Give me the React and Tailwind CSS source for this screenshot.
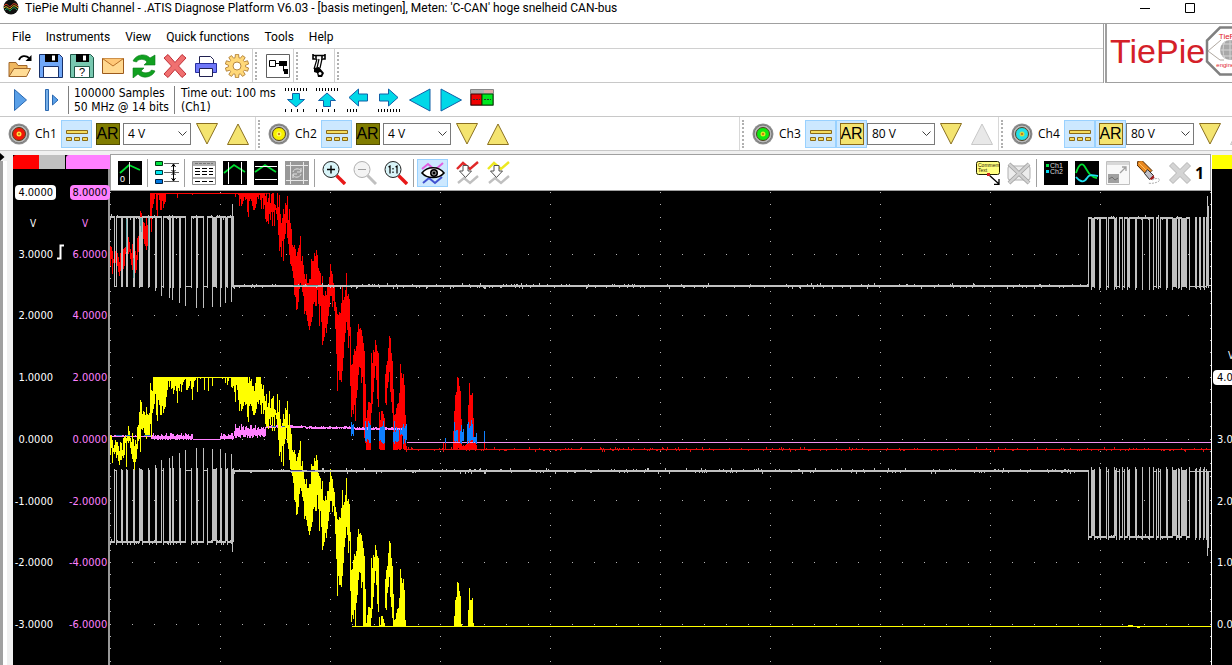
import { useState } from 'react';
import clsx from 'clsx';

// Small seeded generator so the noise on the traces is stable between renders
function createRandom(seed) {
    let s = seed;
    return () => {
        s = (s * 16807) % 2147483647;
        return s / 2147483647;
    };
}

// Signal envelope: [x, top, bottom]
const ENVELOPE = [
    [110, 439, 453], [114, 441, 457], [118, 447, 465], [121, 445, 463], [125, 432, 449], [128, 426, 443], [133, 443, 464],
    [136, 438, 455], [140, 404, 434], [143, 408, 430], [146, 416, 441], [149, 408, 434], [152, 384, 416], [155, 366, 400],
    [161, 360, 414], [165, 360, 408], [168, 350, 386], [177, 350, 394], [184, 350, 386], [190, 350, 388], [192, 350, 398],
    [194, 350, 377], [221, 350, 377], [228, 350, 384], [236, 360, 390], [239, 370, 414], [245, 370, 402], [249, 378, 402],
    [253, 386, 417], [259, 370, 400], [263, 388, 412], [266, 408, 428], [270, 402, 424], [273, 398, 418], [276, 408, 424],
    [281, 420, 458], [286, 410, 436], [290, 432, 470], [293, 448, 486], [296, 458, 520], [300, 452, 488], [305, 482, 515],
    [309, 484, 533], [312, 464, 522], [316, 454, 492], [320, 478, 518], [323, 502, 544], [326, 498, 536], [330, 468, 500],
    [334, 488, 518], [337, 522, 580], [341, 510, 586], [346, 488, 530], [349, 505, 548], [351, 565, 627], [354, 555, 616],
    [359, 526, 575], [362, 540, 590], [364, 560, 640], [366, 620, 660], [370, 600, 660], [371, 575, 626], [375, 542, 578],
    [378, 560, 620], [379, 620, 660], [384, 620, 660], [385, 580, 616], [389, 538, 580], [392, 560, 620], [394, 615, 660],
    [398, 605, 660], [400, 578, 660], [401, 576, 640], [404, 584, 660], [406, 645, 660],
];

const BURSTS = [
    [[453, 640, 660], [455, 600, 660], [457, 578, 660], [460, 600, 660], [462, 650, 660]],
    [[467, 640, 660], [469, 588, 660], [472, 600, 660], [474, 650, 660]],
];

function columns(points, getOffset, min, max, seed) {
    const rand = createRandom(seed);
    let d = '';
    for (let i = 0; i < points.length - 1; i++) {
        const [x0, t0, b0] = points[i];
        const [x1, t1, b1] = points[i + 1];
        for (let x = x0; x < x1; x++) {
            const k = (x - x0) / (x1 - x0);
            const offset = getOffset(x);
            let top = t0 + (t1 - t0) * k + rand() * 12 - 4;
            let bottom = b0 + (b1 - b0) * k - rand() * 12 + 4;
            if (rand() > 0.9) top -= 14;
            if (rand() > 0.88) bottom += 16;
            top = Math.max(min, Math.min(max - 1, Math.round(top + offset)));
            bottom = Math.max(top + 1, Math.min(max, Math.round(bottom + offset)));
            d += `M${x}.5 ${top}V${bottom}`;
        }
    }
    return d;
}

const YELLOW = [ENVELOPE, ...BURSTS].map((points) => columns(points, () => 0, 377, 627, 77)).join('');
const RED = [ENVELOPE, ...BURSTS]
    .map((points) => columns(points, (x) => (x < 150 ? -189 : -205), 193, 450, 77))
    .join('');

function fuzz(ranges, seed) {
    const rand = createRandom(seed);
    let d = '';
    ranges.forEach(([from, to, top, bottom]) => {
        for (let x = from; x < to; x++) {
            const a = Math.round(top + rand() * (bottom - top) * 0.5);
            const b = Math.round(bottom - rand() * (bottom - top) * 0.2);
            d += `M${x}.5 ${a}V${Math.max(a + 1, b)}`;
        }
    });
    return d;
}

const PINK = fuzz([
    [110, 151, 435, 437], [151, 193, 433, 440], [193, 220, 439, 440], [220, 234, 433, 440],
    [234, 266, 424, 438], [266, 306, 425, 428], [306, 355, 426, 429], [355, 406, 427, 430],
], 11);

const BLUE = fuzz([
    [351, 354, 422, 436], [365, 371, 420, 444], [379, 385, 420, 444], [393, 399, 421, 444], [400, 403, 424, 436],
    [403, 407, 421, 444], [454, 458, 420, 444], [460, 464, 424, 444], [467, 473, 420, 444], [473, 477, 430, 444],
    [484, 485, 430, 444], [445, 446, 436, 444],
], 23);

const RED_FEET = fuzz([
    [366, 370, 443, 450], [379, 385, 443, 450], [393, 399, 443, 450], [403, 407, 443, 450], [454, 455, 430, 450],
    [460, 468, 444, 450], [473, 477, 443, 450], [484, 485, 441, 450], [443, 444, 441, 450], [445, 446, 437, 450],
], 31);

function wobble(from, to, y, seed, height = 2) {
    const rand = createRandom(seed);
    let d = '';
    for (let x = from; x < to; x++) {
        const r = rand();
        let up = 0;
        let down = 0;
        if (r > 0.9) up = r > 0.975 ? 2 : 1;
        if (r < 0.1) down = r < 0.02 ? 2 : 1;
        d += `M${x}.5 ${y - up}V${y + height + down}`;
    }
    return d;
}

// Recessive parts of the bus signal: [start, end, overshoot, filled]
const LEFT_PULSES = [
    [114, 116, 1], [121, 122, 1], [126, 127, 1], [133, 134, 1], [139, 142, 2, true], [148, 149, 2], [155, 156, 5],
    [161, 163, 10], [169, 170, 12], [172, 173, 14], [179, 180, 17], [185, 191, 20], [196, 197, 22], [203, 207, 22],
    [212, 216, 21, true], [220, 221, 21], [225, 227, 17, true], [231, 233, 16, true],
];

const RIGHT_PULSES = [
    [1091, 1094, 4, true], [1099, 1100, 4], [1106, 1108, 4], [1114, 1116, 4, true], [1116, 1119, 3], [1122, 1124, 4],
    [1127, 1129, 4, true], [1135, 1136, 4], [1142, 1142, 4], [1149, 1149, 4], [1153, 1156, 4], [1158, 1160, 3],
    [1166, 1167, 4], [1172, 1176, 4, true], [1178, 1179, 3], [1181, 1186, 4, true], [1189, 1195, 4], [1196, 1199, 3],
    [1200, 1203, 4], [1204, 1206, 4],
];

function pulses(list, from, to, dominant, idle) {
    const dir = idle > dominant ? 1 : -1;
    const flat = Math.min(dominant, dominant - dir);
    let lines = '';
    let x = from;
    list.forEach(([a, b, over, filled]) => {
        lines += wobble(x, a + 1, flat, a);
        lines += `M${a}.5 ${dominant}V${idle + over * dir}`;
        lines += `M${a} ${idle}.5H${b + 1}M${b}.5 ${dominant - dir}V${idle + (over > 2 ? 2 : 0) * dir}`;
        if (filled) {
            for (let c = a + 1; c < b; c++) lines += `M${c}.5 ${dominant}V${idle + dir}`;
        }
        x = b;
    });
    return lines + wobble(x, to, flat, x);
}

const GREY = [
    pulses(LEFT_PULSES, 110, 233, 217, 286),
    pulses(LEFT_PULSES, 110, 233, 541, 470),
    pulses(RIGHT_PULSES, 1088, 1207, 218, 286),
    pulses(RIGHT_PULSES, 1088, 1207, 536, 471),
    wobble(234, 1089, 285, 5),
    wobble(234, 1089, 470, 9),
    'M232.5 204V287M232.5 470V552M1088.5 217V287M1088.5 470V538',
    'M1207.5 196V286M1208.5 206V288M1207.5 471V556M1208.5 471V548M1207 285.5H1211M1207 471.5H1211',
].join('');

const RED_IDLE = wobble(406, 1211, 449, 41, 1);

// Graticule: dotted verticals on every division, dotted rows between them
let GRID = '';
for (let col = 0; col <= 10; col++) {
    for (let row = 0; row < 39; row++) GRID += `M${110 + col * 110} ${Math.round(192 + row * 12.33)}.5h1`;
}
for (let row = 1; row < 8; row++) {
    for (let col = 0; col <= 50; col++) GRID += `M${110 + col * 22} ${Math.round(192 + row * 61.65)}.5h1`;
}

function Plot() {
    return (
        <svg
            role="img"
            aria-label="Oscilloscope graph"
            viewBox="110 191 1101 474"
            preserveAspectRatio="none"
            shapeRendering="crispEdges"
            className="block w-full min-h-0 flex-1 bg-black"
            fill="none"
        >
            <path d={GRID} stroke="#b4b4b4" />
            <path d="M190 193.5H270" stroke="#b00000" />
            <path d={RED} stroke="#ff0000" />
            <path d={RED_IDLE} stroke="#e81010" />
            <path d={RED_FEET} stroke="#ff0000" />
            <path d={PINK} stroke="#ff80ff" />
            <path d="M407 442.5H1211" stroke="#f090f0" />
            <path d={BLUE} stroke="#1080ff" />
            <path d="M190 377.5H236M352 626.5H1211M459 625.5h3M1128 625.5h5M1137 627.5h3" stroke="#ffff00" />
            <path d={YELLOW} stroke="#ffff00" />
            <path d={GREY} stroke="#c0c0c0" />
            <path d="M126.5 219V252M133.5 258V278M148.5 218V250M140.5 218V226M141.5 218V232M293 285.5H303M307 285.5H318M347 285.5h3" stroke="#60a8a8" />
            <path d="M116 435.5h6M126 435.5h4M144 435.5h7M272 426.5h4M282 426.5h3" stroke="#1870b0" />
            <path d="M290 470.5h12M307 470.5h8" stroke="#404080" />
        </svg>
    );
}

function Svg({ children, size = 24 }) {
    return (
        <svg width={size} height={size} viewBox="0 0 24 24" fill="none" aria-hidden="true" className="shrink-0">
            {children}
        </svg>
    );
}

function gearPath() {
    let d = '';
    for (let i = 0; i < 10; i++) {
        const a = (i * Math.PI) / 5;
        [[-0.22, 8.5], [-0.14, 11.8], [0.14, 11.8], [0.22, 8.5]].forEach(([da, r]) => {
            const x = 12 + r * Math.sin(a + da);
            const y = 12 - r * Math.cos(a + da);
            d += `${d ? 'L' : 'M'}${x.toFixed(1)} ${y.toFixed(1)}`;
        });
    }
    return `${d}Z`;
}

const GEAR = gearPath();

const icons = {
    open: (
        <Svg>
            <path d="M1 22.500V8.500h7l2 3h9v3" fill="#f0b860" stroke="#a0662a" />
            <path d="M1 22.500l5-8h16.500l-4 8z" fill="#ffdc96" stroke="#a0662a" />
            <path d="M11 6C12.500 1.500 18 1 21 4" stroke="#000" strokeWidth="1.800" />
            <path d="M23.500 1v6h-6z" fill="#000" />
        </Svg>
    ),
    save: (
        <Svg>
            <path d="M.5.500h20l3 3v20H.500z" fill="#70a8f8" stroke="#183068" />
            <path d="M6 0h13v8H6z" fill="#000" />
            <path d="M13 1.500h3v5h-3z" fill="#fff" />
            <path d="M4.500 12.500h15v11h-15z" fill="#fff" stroke="#183068" />
        </Svg>
    ),
    saveAs: (
        <Svg>
            <path d="M.5.500h20l3 3v20H.500z" fill="#78c8b0" stroke="#205848" />
            <path d="M6 0h13v8H6z" fill="#000" />
            <path d="M13 1.500h3v5h-3z" fill="#fff" />
            <path d="M4.500 12.500h15v11h-15z" fill="#fff" stroke="#205848" />
            <text x="12" y="22" fontSize="11" textAnchor="middle" fill="#000" fontFamily="Liberation Sans, sans-serif">?</text>
        </Svg>
    ),
    mail: (
        <Svg>
            <path d="M1.500 4.500h21v15h-21z" fill="#ffd890" stroke="#9c5a1c" />
            <path d="M1.500 4.500L12 12l10.500-7.500" fill="#ffc878" stroke="#b87028" />
        </Svg>
    ),
    refresh: (
        <Svg>
            <path d="M1 7C4 0 14-1 18 4l5-3v10H12l3-3C12 4 6 5 4.500 8z" fill="#10a020" stroke="#087818" strokeWidth=".6" />
            <path d="M23 17c-3 7-13 8-17 3l-5 4V14h11l-3 3c3 3 9 2 10.500-1z" fill="#10a020" stroke="#087818" strokeWidth=".6" />
        </Svg>
    ),
    remove: (
        <Svg>
            <path d="M1 4l4-3.500 7 8 7-8L23 4l-7.500 8 7.500 8-4 3.500-7-8-7 8L1 20l7.500-8z" fill="#f07070" stroke="#c03038" />
        </Svg>
    ),
    print: (
        <Svg>
            <path d="M5.500 2.500h11l3 3v5h-14z" fill="#fff" stroke="#202050" />
            <path d="M1.500 9.500h21v9h-21z" fill="#7078f8" stroke="#2830a0" />
            <path d="M5.500 14.500h13v8h-13z" fill="#fff" stroke="#202050" />
        </Svg>
    ),
    gear: (
        <Svg>
            <path d={GEAR} fill="#ffd878" stroke="#b88840" />
            <circle cx="12" cy="12" r="4" fill="#fff" stroke="#b88840" />
        </Svg>
    ),
    objects: (
        <Svg>
            <path d="M.5.500h23v23H.500z" fill="#fff" stroke="#606060" />
            <path d="M3.500 6.500h6v6h-6z" stroke="#000" />
            <path d="M10 9.500h4M17.500 11v6h1" stroke="#000" />
            <path d="M13 7h8v5h-8zM18 15h4v5h-4z" fill="#000" />
        </Svg>
    ),
    probe: (
        <Svg>
            <path d="M6 1.500h12M6 0v5h2M18 0v5h-2M9 2v4M15 2v4" stroke="#000" strokeWidth="1.600" />
            <path d="M10 5l-3 10M15 5l-2 9M12 5l-2 9" stroke="#000" strokeWidth="1.200" />
            <path d="M7 14l5-1 5 6-2 4h-4l-1-4-3-1z" fill="#000" />
            <circle cx="13" cy="19.500" r="1.500" fill="#fff" />
        </Svg>
    ),
    play: <Svg><path d="M6.500 1.500l12 10.500-12 10.500z" fill="#5aa0e8" stroke="#2a68b0" /></Svg>,
    step: (
        <Svg>
            <path d="M6.500 1.500h3v21h-3z" fill="#78b0e8" stroke="#2a68b0" />
            <path d="M13.500 7l5.500 5-5.500 5z" fill="#5aa0e8" stroke="#2a68b0" />
        </Svg>
    ),
    down: (
        <Svg>
            <path d="M1.500 0v3M4.500 0v3M7.500 0v3M10.500 0v3M13.500 0v3M16.500 0v3M19.500 0v3M22.500 0v3M1.500 21v3M7.500 21v3M13.500 21v3M19.500 21v3" stroke="#000" />
            <path d="M8.500 5.500h7v6h5L12 19l-8.500-7.500h5z" fill="#00d8e8" stroke="#1060a8" />
        </Svg>
    ),
    up: (
        <Svg>
            <path d="M1.500 0v3M4.500 0v3M7.500 0v3M10.500 0v3M13.500 0v3M16.500 0v3M19.500 0v3M22.500 0v3M1.500 21v3M7.500 21v3M13.500 21v3M19.500 21v3" stroke="#000" />
            <path d="M8.500 18.500h7v-6h5L12 5l-8.500 7.500h5z" fill="#00d8e8" stroke="#1060a8" />
        </Svg>
    ),
    left: (
        <Svg>
            <path d="M21.500 6v7h-9v5L3 9.500 12.500 1v5z" fill="#00d8e8" stroke="#1060a8" />
            <path d="M1.500 21v3M4.500 21v3M7.500 21v3M10.500 21v3" stroke="#000" />
        </Svg>
    ),
    right: (
        <Svg>
            <path d="M2.500 6v7h9v5L21 9.500 11.500 1v5z" fill="#00d8e8" stroke="#1060a8" />
            <path d="M1.500 21v3M4.500 21v3M7.500 21v3M10.500 21v3M13.500 21v3M16.500 21v3M19.500 21v3M22.500 21v3" stroke="#000" />
        </Svg>
    ),
    prev: <Svg><path d="M22 1v22L1.500 12z" fill="#00d8e8" stroke="#1060a8" /></Svg>,
    next: <Svg><path d="M2 1v22l20.500-11z" fill="#00d8e8" stroke="#1060a8" /></Svg>,
    panels: (
        <Svg>
            <path d="M.5 1.500h23v16H.500z" fill="#b0b0b0" stroke="#888" />
            <path d="M14 2h9v3h-9z" fill="#e0a8a8" />
            <path d="M1 6h11v11H1z" fill="#f00000" stroke="#400" />
            <path d="M12 6h11v11H12z" fill="#00e820" stroke="#040" />
            <path d="M3 11.500h7M14 11.500h7" stroke="#303030" strokeDasharray="2 1" />
        </Svg>
    ),
    zero: (
        <Svg>
            <path d="M0 0h24v24H0z" fill="#000" />
            <path d="M2 12l9-8 11 5" stroke="#00e030" strokeWidth="1.800" />
            <path d="M11.500 1v22" stroke="#e0e0e0" />
            <text x="2" y="21" fontSize="9" fill="#fff" fontFamily="Liberation Sans, sans-serif">0</text>
        </Svg>
    ),
    channels: (
        <Svg>
            <path d="M9 2.500h15M9 11.500h15M9 20.500h15" stroke="#606060" />
            <path d="M.5.500h7v4h-7z" fill="#00e040" stroke="#003810" />
            <path d="M.5 9.500h7v4h-7z" fill="#00e8f0" stroke="#003838" />
            <path d="M.5 18.500h7v4h-7z" fill="#0078e0" stroke="#002040" />
            <path d="M18.500 3v17M16.500 6l2-3 2 3M16.500 9l2 2 2-2M16.500 14l2-2 2 2M16.500 17l2 3 2-3" stroke="#000" />
        </Svg>
    ),
    table: (
        <Svg>
            <path d="M.5.500h23v23H.500z" fill="#fff" stroke="#909090" />
            <path d="M1 1h22v4H1z" fill="#b0b0b0" />
            <path d="M3 2.500h18" stroke="#777" strokeDasharray="3 1" />
            <path d="M3 7.500h18M3 10.500h18M3 13.500h18M3 20.500h18" stroke="#000" strokeDasharray="5 2" />
            <path d="M1 17h22" stroke="#606060" />
        </Svg>
    ),
    cursorsV: (
        <Svg>
            <path d="M0 0h24v24H0z" fill="#000" />
            <path d="M1 12l10-8 11 7" stroke="#00e030" strokeWidth="1.800" />
            <path d="M5.500 1v22M18.500 1v22" stroke="#fff" />
        </Svg>
    ),
    cursorsH: (
        <Svg>
            <path d="M0 0h24v24H0z" fill="#000" />
            <path d="M1 11l10-7 11 7" stroke="#00e030" strokeWidth="1.800" />
            <path d="M1 5.500h22M1 18.500h22" stroke="#fff" />
        </Svg>
    ),
    cursorsOff: (
        <Svg>
            <path d="M0 0h24v24H0z" fill="#989898" />
            <path d="M5.500 1v22M18.500 1v22M1 4.500h22M1 19.500h22" stroke="#e8e8e8" />
            <path d="M8 11c1-4 7-4 8-1M16 13c-1 4-7 4-8 1M16 7v4h-4M8 17v-4h4" stroke="#e0e0e0" />
        </Svg>
    ),
    zoomIn: (
        <Svg>
            <path d="M14.500 14.500l8.500 8.500" stroke="#e81818" strokeWidth="3.400" />
            <circle cx="9" cy="8.500" r="8" fill="#d8f4f8" stroke="#202020" />
            <path d="M5 8.500h8M9 4.500v8" stroke="#000" strokeWidth="1.400" />
        </Svg>
    ),
    zoomOut: (
        <Svg>
            <path d="M14.500 14.500l8.500 8.500" stroke="#c0c0c0" strokeWidth="3" />
            <circle cx="9" cy="8.500" r="8" fill="#f4f4f4" stroke="#b0b0b0" />
            <path d="M5 8.500h8" stroke="#a0a0a0" />
        </Svg>
    ),
    zoomFit: (
        <Svg>
            <path d="M14.500 14.500l8.500 8.500" stroke="#e81818" strokeWidth="3.400" />
            <circle cx="9" cy="8.500" r="8" fill="#d8f4f8" stroke="#202020" />
            <path d="M4.500 6L6 5v7.500M11.500 6L13 5v7.500M9 7v1.500M9 10.500V12" stroke="#000" strokeWidth="1.200" />
        </Svg>
    ),
    eye: (
        <Svg>
            <path d="M1 8l6-5 7 6 8-7" stroke="#e060e0" strokeWidth="2" />
            <path d="M2 22l6-5 6 5 7-6" stroke="#4050d0" strokeWidth="2" />
            <path d="M1 12c5-7 17-7 22 0-5 6-17 6-22 0z" fill="#fff" stroke="#000" strokeWidth="1.600" />
            <circle cx="13" cy="12" r="4" fill="#000" />
            <circle cx="13" cy="12" r="2" stroke="#aaa" />
        </Svg>
    ),
    toRef: (
        <Svg>
            <path d="M1 8l6-6 7 6 8-7" stroke="#e02828" strokeWidth="2.400" />
            <path d="M2 22l6-5 6 5 8-7" stroke="#c0c0c0" strokeWidth="2.400" />
            <path d="M7 4.500h5V10h3.500l-6 6.500-6-6.500H7z" fill="#fff" stroke="#505050" />
        </Svg>
    ),
    toRefYellow: (
        <Svg>
            <path d="M1 8l6-6 7 6 8-7" stroke="#ece820" strokeWidth="2.400" />
            <path d="M2 22l6-5 6 5 8-7" stroke="#c0c0c0" strokeWidth="2.400" />
            <path d="M7 4.500h5V10h3.500l-6 6.500-6-6.500H7z" fill="#fff" stroke="#505050" />
        </Svg>
    ),
    comment: (
        <Svg>
            <rect x=".5" y=".5" width="23" height="13" rx="2" fill="#ffff80" stroke="#202000" />
            <text x="2" y="6" fontSize="5" fill="#302000" fontFamily="Liberation Sans, sans-serif">Comment</text>
            <text x="2" y="11" fontSize="5" fill="#302000" fontFamily="Liberation Sans, sans-serif">Text</text>
            <path d="M13 14l10 9M23 18v5.500h-5" stroke="#000" strokeWidth="1.300" />
            <path d="M11 12h3v3h-3z" fill="#d02020" />
        </Svg>
    ),
    commentOff: (
        <Svg>
            <rect x="1" y="5" width="22" height="14" rx="2" fill="#ececec" stroke="#b0b0b0" />
            <path d="M2 3l20 19M22 3L2 22" stroke="#a0a0a0" strokeWidth="4" />
            <path d="M2 3l20 19M22 3L2 22" stroke="#d0d0d0" strokeWidth="2.500" />
        </Svg>
    ),
    legend: (
        <Svg>
            <path d="M0 0h24v24H0z" fill="#000" />
            <path d="M2 3h3v3H2z" fill="#00e040" />
            <path d="M2 9h3v3H2z" fill="#00d8f0" />
            <text x="6" y="7" fontSize="7" fill="#d8d8d8" fontFamily="Liberation Sans, sans-serif">Ch1</text>
            <text x="6" y="13" fontSize="7" fill="#d8d8d8" fontFamily="Liberation Sans, sans-serif">Ch2</text>
        </Svg>
    ),
    waves: (
        <Svg>
            <path d="M0 0h24v24H0z" fill="#000" />
            <path d="M1 12C4 3 7 1 10 6s5 10 12 11" stroke="#00e030" strokeWidth="1.800" />
            <path d="M1 16c4 5 8 6 11 1 2-4 6-3 11-2" stroke="#20e0f0" strokeWidth="1.800" />
        </Svg>
    ),
    windowOff: (
        <Svg>
            <path d="M.5.500h23v23H.500z" fill="#f8f8f8" stroke="#c0c0c0" />
            <path d="M1 1h22v3H1z" fill="#d8d8d8" />
            <path d="M2 13h11v9H2z" fill="#a0a0a0" />
            <path d="M3 18l3-2 3 3 3-2" stroke="#707070" />
            <path d="M14 12l6-6M16 6h4v4" stroke="#a0a0a0" strokeWidth="1.300" />
        </Svg>
    ),
    brush: (
        <Svg>
            <path d="M1 0l4-.500 10 10-5 5L0 4z" fill="#e88820" stroke="#502800" />
            <path d="M2 2l9 9" stroke="#ffc060" />
            <path d="M10.500 8.500l6 6-4 4-5-6z" fill="#c0c0c8" stroke="#303030" />
            <path d="M12.500 18l4-4 1 3-3 2z" fill="#a02020" />
            <path d="M15 19c5-3 9-1 7 1s-9 3-11 2" stroke="#b0b0b0" strokeDasharray="2 1" />
        </Svg>
    ),
    clearOff: (
        <Svg>
            <path d="M1.500 5L5 1.500l7 7 7-7L22.500 5l-7 7 7 7-3.500 3.500-7-7-7 7L1.500 19l7-7z" fill="#d4d4d4" stroke="#b4b4b4" />
        </Svg>
    ),
    rangeDown: <Svg><path d="M1.500 1.500h21L12 22z" fill="#f4e470" stroke="#8a7020" /></Svg>,
    rangeUp: <Svg><path d="M1.500 22.500h21L12 2z" fill="#f4e470" stroke="#8a7020" /></Svg>,
    rangeUpOff: <Svg><path d="M1.500 22.500h21L12 2z" fill="#e8e8e8" stroke="#c8c8c8" /></Svg>,
    coupling: (
        <Svg>
            <path d="M1.500 8.500h21v3h-21zM1.500 15.500h5v3h-5zM9.500 15.500h5v3h-5zM17.500 15.500h5v3h-5z" fill="#f4dc60" stroke="#8a6a18" />
        </Svg>
    ),
};

function ToolButton({ icon, label, active, onClick }) {
    return (
        <button
            type="button"
            aria-label={label}
            title={label}
            onClick={onClick}
            className={clsx(
                'flex h-7 w-[31px] shrink-0 items-center justify-center',
                active && 'border border-[#99d1ff] bg-[#cce8ff]'
            )}
        >
            {icons[icon]}
        </button>
    );
}

function Grip() {
    return <span className="ml-[2px] h-7 w-0 shrink-0 border-l-2 border-dotted border-[#b0b0b0]" />;
}

function Separator() {
    return <span className="mr-[3px] ml-[2px] h-7 w-px shrink-0 border-l border-[#a0a0a0]" />;
}

const MENU = ['File', 'Instruments', 'View', 'Quick functions', 'Tools', 'Help'];

const FILE_TOOLS = [
    ['open', 'Open'], ['save', 'Save'], ['saveAs', 'Save as'], ['mail', 'Send mail'],
    ['refresh', 'Refresh'], ['remove', 'Delete'], ['print', 'Print'], ['gear', 'Settings'],
];

const TIME_TOOLS = [
    ['down', 'Fewer samples'], ['up', 'More samples'], ['left', 'Slower'], ['right', 'Faster'],
    ['prev', 'Previous'], ['next', 'Next'], ['panels', 'Instrument panels'],
];

function TitleBar() {
    return (
        <header className="flex h-6 items-start border-b border-[#a0a0a0]">
            <svg width="16" height="16" viewBox="0 0 16 16" className="ml-[3px] shrink-0" aria-hidden="true">
                <circle cx="8" cy="7" r="7.500" fill="#101010" />
                <path d="M1 6c3-5 5 3 7 0s4-3 7 0" stroke="#e04020" fill="none" />
                <path d="M1 8c3-4 5 3 7 0s4-3 7 0" stroke="#e0c020" fill="none" />
                <path d="M2 10c3-4 4 3 6 0s4-3 6 0" stroke="#20b060" fill="none" />
            </svg>
            <h1 className="ml-[6px] font-['Roboto',sans-serif] text-[12px] leading-4 whitespace-nowrap">
                TiePie Multi Channel - .ATIS Diagnose Platform V6.03 - [basis metingen], Meten: 'C-CAN' hoge snelheid CAN-bus
            </h1>
            <div className="-mr-3 ml-auto flex shrink-0">
                <button type="button" aria-label="Minimize" className="flex h-4 w-[45px] items-center justify-center">
                    <svg width="10" height="10" viewBox="0 0 10 10"><path d="M0 5.500h10" stroke="#000" /></svg>
                </button>
                <button type="button" aria-label="Maximize" className="flex h-4 w-[45px] items-center justify-center">
                    <svg width="10" height="10" viewBox="0 0 10 10"><path d="M.5.500h9v9h-9z" stroke="#000" fill="none" /></svg>
                </button>
                <button type="button" aria-label="Close" className="flex h-4 w-8 items-center justify-end">
                    <svg width="10" height="10" viewBox="0 0 10 10"><path d="M0 0l10 10M10 0L0 10" stroke="#000" /></svg>
                </button>
            </div>
        </header>
    );
}

function Logo() {
    return (
        <div className="ml-px flex w-[127px] shrink-0 items-center overflow-hidden border-b border-l-2 border-[#a0a0a0] pb-1 pl-[3px]">
            <span className="font-['Liberation_Sans',sans-serif] text-[34px] leading-[40px] text-[#d42028]">TiePie</span>
            <svg width="50" height="50" viewBox="0 0 50 50" className="shrink-0" aria-label="TiePie engineering">
                <path d="M15 1.500h20l13 13v21l-13 13H15l-13-13v-21z" fill="#fff" stroke="#808080" strokeWidth="2.500" />
                <path d="M3 25L16 14M3 25l12 9h4" stroke="#b0a8a0" fill="none" />
                <circle cx="25" cy="24" r="10" fill="#a8a8a8" />
                <path d="M15 24h20M17 18h16M17 30h16M25 14v20M20 15q-4 9 0 18M30 15q4 9 0 18" stroke="#d4d4d4" fill="none" />
                <text x="25" y="13" fontSize="8" textAnchor="middle" fill="#e02028" fontFamily="Liberation Sans, sans-serif">TiePie</text>
                <text x="27" y="41" fontSize="6" textAnchor="middle" fill="#e02028" fontFamily="Liberation Sans, sans-serif">engineering</text>
            </svg>
        </div>
    );
}

const RANGES = ['200 mV', '400 mV', '800 mV', '2 V', '4 V', '8 V', '20 V', '40 V', '80 V'];

function Channel({ name, color, center, initialRange, autoRange, canGoUp }) {
    const [range, setRange] = useState(initialRange);
    const [auto, setAuto] = useState(autoRange);

    return (
        <div className="flex h-full shrink-0 items-center">
            <button type="button" aria-label={`${name} on or off`} className="ml-2 shrink-0">
                <svg width="22" height="22" viewBox="0 0 22 22">
                    <circle cx="11" cy="11" r="10.500" fill="#909090" />
                    <circle cx="11" cy="11" r="9" fill="#b8b8b8" stroke="#787878" />
                    <circle cx="11" cy="11" r="6.500" fill={color} stroke="#504020" />
                    <circle cx="11" cy="11" r="2.500" fill={center} />
                    <circle cx="11" cy="11" r="1" fill="#c06010" />
                </svg>
            </button>
            <label htmlFor={name} className="ml-[5px] w-[26px] text-[12px] leading-4">{name}</label>
            <ToolButton icon="coupling" label={`${name} coupling`} active />
            <button
                type="button"
                aria-pressed={auto}
                onClick={() => setAuto(!auto)}
                className={clsx(
                    'flex h-7 w-[31px] shrink-0 items-center justify-center border',
                    auto ? 'border-[#99d1ff] bg-[#cce8ff]' : 'border-transparent'
                )}
            >
                <span
                    className={clsx(
                        "flex h-[22px] w-6 items-center justify-center border font-['Liberation_Sans',sans-serif] text-[16px] leading-5",
                        auto ? 'border-[#8a6a18] bg-[#f4e470]' : 'border-[#504a00] bg-[#807c00]'
                    )}
                >
                    AR
                </span>
            </button>
            <span className="relative shrink-0">
                <select
                    id={name}
                    value={range}
                    onChange={(e) => setRange(e.target.value)}
                    className="block h-[22px] w-[68px] appearance-none border border-[#7a7a7a] bg-white pl-1 text-[12px] leading-4"
                >
                    {RANGES.map((r) => (
                        <option key={r} value={r}>{r}</option>
                    ))}
                </select>
                <svg width="9" height="6" viewBox="0 0 9 6" className="pointer-events-none absolute top-2 right-1" aria-hidden="true">
                    <path d="M.5.500l4 4 4-4" stroke="#404040" fill="none" />
                </svg>
            </span>
            <ToolButton icon="rangeDown" label={`${name} more sensitive`} />
            <ToolButton icon={canGoUp ? 'rangeUp' : 'rangeUpOff'} label={`${name} less sensitive`} />
        </div>
    );
}

function ScaleLabels({ values, tag, className, children }) {
    return (
        <div
            className={clsx(
                "relative flex h-[447px] flex-col items-end justify-between font-['DejaVu_Sans_Condensed','Noto_Sans',sans-serif] text-[11px] leading-[15px]",
                className
            )}
        >
            {values.map((value, i) => (
                <span key={value} className={clsx('h-[15px] px-[3px]', i === 0 && `rounded-[4px] ${tag}`)}>
                    {value}
                </span>
            ))}
            {children}
        </div>
    );
}

function Scales() {
    return (
        <div className="mt-1 flex w-[97px] shrink-0 border-r-2 border-[#989898] bg-black">
            <div className="w-[53px]">
                <div className="flex h-[14px] border-r border-black">
                    <span className="w-1/2 rounded-tl-[3px] bg-[#ff0000]" />
                    <span className="w-1/2 bg-[#c0c0c0]" />
                </div>
                <ScaleLabels
                    values={['4.0000', '3.0000', '2.0000', '1.0000', '0.0000', '-1.0000', '-2.0000', '-3.0000']}
                    tag="bg-white text-black"
                    className="mt-4 mr-[10px] text-white"
                >
                    <span className="absolute top-[31px] left-[17px] text-[10px]">V</span>
                    <svg width="8" height="16" viewBox="0 0 8 16" className="absolute top-[59px] -right-[9px]" aria-label="Trigger level">
                        <path d="M0 14.500h3.500V1.500H7" stroke="#fff" strokeWidth="2" fill="none" />
                    </svg>
                </ScaleLabels>
            </div>
            <div className="flex-1">
                <div className="h-[14px] rounded-t-[3px] bg-[#ff80ff]" />
                <ScaleLabels
                    values={['8.0000', '6.0000', '4.0000', '2.0000', '0.0000', '-2.0000', '-4.0000', '-6.0000']}
                    tag="bg-[#ff80ff] text-black"
                    className="mt-4 mr-[3px] text-[#ff80ff]"
                >
                    <span className="absolute top-[31px] left-4 text-[10px]">V</span>
                </ScaleLabels>
            </div>
        </div>
    );
}

function GraphToolbar() {
    const [showRef, setShowRef] = useState(true);

    return (
        <div className="flex h-[37px] shrink-0 items-center border border-[#a0a0a0] bg-white pl-[3px]">
            <ToolButton icon="zero" label="Zero position" />
            <Separator />
            <ToolButton icon="channels" label="Arrange channels" />
            <Separator />
            <ToolButton icon="table" label="Cursor table" />
            <ToolButton icon="cursorsV" label="Vertical cursors" />
            <ToolButton icon="cursorsH" label="Horizontal cursors" />
            <ToolButton icon="cursorsOff" label="Reset cursors" />
            <Separator />
            <ToolButton icon="zoomIn" label="Zoom in" />
            <ToolButton icon="zoomOut" label="Zoom out" />
            <ToolButton icon="zoomFit" label="Zoom 1:1" />
            <Separator />
            <ToolButton icon="eye" label="Show references" active={showRef} onClick={() => setShowRef(!showRef)} />
            <span className="w-1" />
            <ToolButton icon="toRef" label="Copy to reference" />
            <ToolButton icon="toRefYellow" label="Copy yellow to reference" />
            <div className="ml-auto flex items-center">
                <ToolButton icon="comment" label="Add comment" />
                <ToolButton icon="commentOff" label="Remove comments" />
                <Separator />
                <ToolButton icon="legend" label="Legend" />
                <ToolButton icon="waves" label="Interpolation" />
                <ToolButton icon="windowOff" label="Detach graph" />
                <ToolButton icon="brush" label="Graph colours" />
                <ToolButton icon="clearOff" label="Close graph" />
                <span className="w-[15px] text-[16px] leading-5 font-bold">1</span>
            </div>
        </div>
    );
}

export default function App() {
    return (
        <div className="flex h-screen flex-col overflow-hidden bg-white font-['Open_Sans','Noto_Sans',sans-serif] text-black">
            <TitleBar />
            <div className="flex shrink-0">
                <div className="min-w-0 flex-1 border-r border-[#a0a0a0]">
                    <nav className="flex h-[25px] items-center gap-px border-b border-[#d0d0d0] pt-[2px] pl-[5px] font-['Roboto',sans-serif] text-[12px] leading-4">
                        {MENU.map((item) => (
                            <button key={item} type="button" className="px-[7px] whitespace-nowrap">{item}</button>
                        ))}
                    </nav>
                    <div className="flex h-[34px] items-center border-b border-[#c8c8c8] pl-1">
                        {FILE_TOOLS.map(([icon, label]) => (
                            <ToolButton key={icon} icon={icon} label={label} />
                        ))}
                        <span className="h-full border-r border-[#d0d0d0]" />
                        <Grip />
                        <span className="w-[5px]" />
                        <ToolButton icon="objects" label="Object tree" />
                        <span className="h-full border-r border-[#d0d0d0]" />
                        <Grip />
                        <span className="w-[5px]" />
                        <ToolButton icon="probe" label="Probe" />
                        <span className="h-full border-r border-[#d0d0d0]" />
                        <Grip />
                    </div>
                </div>
                <Logo />
            </div>

            <div className="flex h-[34px] shrink-0 items-center border-b border-[#c8c8c8] pl-1 font-['DejaVu_Sans_Condensed','Noto_Sans',sans-serif]">
                <ToolButton icon="play" label="Start" />
                <ToolButton icon="step" label="One shot" />
                <p className="ml-[2px] w-[106px] border-l border-[#808080] pl-[5px] text-[12px] leading-[14px] whitespace-nowrap">
                    100000 Samples<br />50 MHz @ 14 bits
                </p>
                <p className="w-[106px] border-l border-[#808080] pl-[6px] text-[12px] leading-[14px] whitespace-nowrap">
                    Time out: 100 ms<br />(Ch1)
                </p>
                {TIME_TOOLS.map(([icon, label]) => (
                    <ToolButton key={icon} icon={icon} label={label} />
                ))}
            </div>

            <div className="flex h-[34px] shrink-0 items-center border-b border-[#c8c8c8]">
                <Channel name="Ch1" color="#f01808" center="#ffe040" initialRange="4 V" autoRange={false} canGoUp />
                <span className="ml-[2px] h-full border-r border-[#d8d8d8]" />
                <Grip />
                <Channel name="Ch2" color="#f8f000" center="#fff860" initialRange="4 V" autoRange={false} canGoUp />
                <div className="ml-auto flex h-full w-[493px] shrink-0 items-center overflow-hidden border-l border-[#d8d8d8]">
                    <Grip />
                    <Channel name="Ch3" color="#10e810" center="#e0e020" initialRange="80 V" autoRange />
                    <span className="ml-px h-full border-r border-[#d8d8d8]" />
                    <Grip />
                    <Channel name="Ch4" color="#20e0e8" center="#d0d840" initialRange="80 V" autoRange />
                </div>
            </div>

            <main className="flex min-h-0 flex-1 bg-[#f0f0f0]">
                <div className="flex w-[13px] shrink-0 flex-col">
                    <svg width="5" height="8" viewBox="0 0 5 8" className="mt-[2px]" aria-hidden="true">
                        <path d="M0 0l4.500 4L0 8z" fill="#000" />
                    </svg>
                    <span className="w-[7px] flex-1 border-r-4 border-l-[3px] border-r-white border-l-[#a0a0a0]" />
                </div>
                <Scales />
                <section className="mt-[3px] flex min-w-0 flex-1 flex-col">
                    <GraphToolbar />
                    <Plot />
                </section>
                <div className="mt-1 w-[21px] shrink-0 overflow-hidden border-l border-white bg-black">
                    <div className="h-[14px] w-full bg-[#ffff00]" />
                    <div className="relative mt-[201px] flex h-[262px] w-10 flex-col items-start justify-between pl-px font-['DejaVu_Sans_Condensed','Noto_Sans',sans-serif] text-[11px] leading-[15px] text-white">
                        <span className="absolute -top-[22px] left-4 text-[10px]">V</span>
                        <span className="rounded-[4px] bg-white px-1 text-black">4.0000</span>
                        <span className="px-1">3.0000</span>
                        <span className="px-1">2.0000</span>
                        <span className="px-1">1.0000</span>
                        <span className="px-1">0.0000</span>
                    </div>
                </div>
            </main>
        </div>
    );
}
